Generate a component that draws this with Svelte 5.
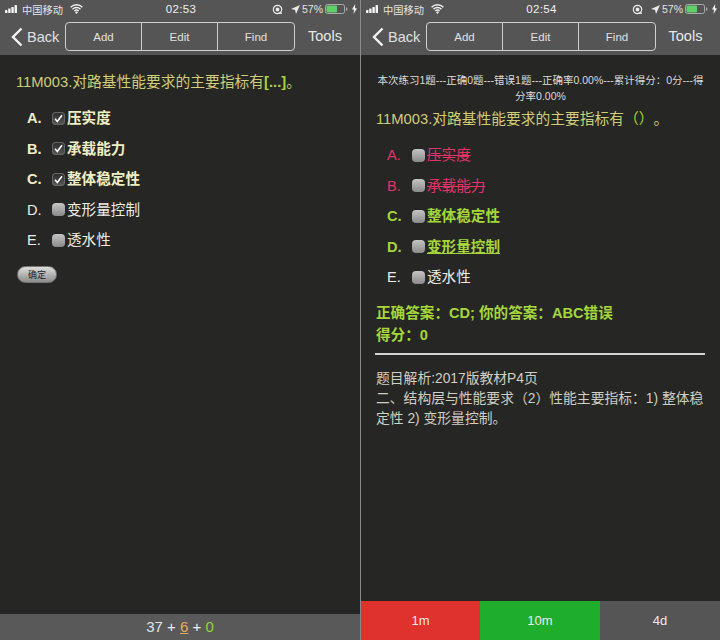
<script>
  const first = [
    { k: 'A.', t: '压实度', on: true, cls: 'chosen' },
    { k: 'B.', t: '承载能力', on: true, cls: 'chosen' },
    { k: 'C.', t: '整体稳定性', on: true, cls: 'chosen' },
    { k: 'D.', t: '变形量控制', on: false, cls: '' },
    { k: 'E.', t: '透水性', on: false, cls: '' }
  ];
  const second = [
    { k: 'A.', t: '压实度', on: false, cls: 'wrong' },
    { k: 'B.', t: '承载能力', on: false, cls: 'wrong' },
    { k: 'C.', t: '整体稳定性', on: false, cls: 'right' },
    { k: 'D.', t: '变形量控制', on: false, cls: 'right under' },
    { k: 'E.', t: '透水性', on: false, cls: '' }
  ];
</script>

{#snippet top(time)}
  <header class="head">
    <div class="status">
      <div class="st-left">
        <svg class="signal" width="15" height="8" viewBox="0 0 15 8"><rect x="0" y="5" width="2.4" height="3" rx=".5"/><rect x="3.2" y="3.6" width="2.4" height="4.4" rx=".5"/><rect x="6.4" y="2" width="2.4" height="6" rx=".5"/><rect x="9.6" y="0" width="2.4" height="8" rx=".5"/></svg>
        <span>中国移动</span>
        <svg class="wifi" width="13" height="10" viewBox="0 0 13 10"><path d="M.6 3.2a8.4 8.4 0 0 1 11.8 0M2.5 5.2a5.7 5.7 0 0 1 8 0M4.4 7.1a3 3 0 0 1 4.2 0" fill="none" stroke="#f2f2f2" stroke-width="1.4"/><path d="M6.5 10 5 8.3a2.1 2.1 0 0 1 3 0z" fill="#f2f2f2"/></svg>
      </div>
      <div class="time">{time}</div>
      <div class="st-right">
        <svg width="11" height="11" viewBox="0 0 11 11"><circle cx="5.5" cy="5.5" r="4.2" fill="none" stroke="#e8e8e8" stroke-width="1.2"/><circle cx="5.5" cy="5.5" r="1.9" fill="#e8e8e8"/><path d="M6 9.2h4" stroke="#e8e8e8" stroke-width="1.3"/></svg>
        <svg class="arrow" width="9" height="9" viewBox="0 0 9 9"><path d="M9 0 0 4l4 1 1 4z" fill="#e8e8e8"/></svg>
        <span class="pct">57%</span>
        <svg class="batt" width="23" height="10" viewBox="0 0 23 10"><rect x=".5" y=".5" width="19" height="9" rx="2" fill="none" stroke="#aaa"/><rect x="1.5" y="1.5" width="10.5" height="7" rx="1" fill="#5fd068"/><path d="M21 3.2c1 0 1.4.7 1.4 1.8S22 6.800 21 6.800z" fill="#aaa"/></svg>
        <svg width="5" height="10" viewBox="0 0 5 10"><path d="M3.200 0 0 5.600h2L1.600 10 5 4.200H3z" fill="#f2f2f2"/></svg>
      </div>
    </div>
    <nav class="nav">
      <div class="back">
        <svg width="12" height="20" viewBox="0 0 12 20"><path d="M10.500 1.500 2 10l8.500 8.500" fill="none" stroke="#f4f4f4" stroke-width="2.400"/></svg>
        <span>Back</span>
      </div>
      <div class="seg">
        <span>Add</span><span>Edit</span><span>Find</span>
      </div>
      <div class="tools">Tools</div>
    </nav>
  </header>
{/snippet}

{#snippet options(list)}
  <ul class="opts">
    {#each list as o}
      <li class={o.cls}>
        <span class="key">{o.k}</span>
        <span class="box" class:on={o.on}>
          {#if o.on}
            <svg width="9" height="9" viewBox="0 0 9 9"><path d="M1 4.800 3.300 7.500 8 1.200" fill="none" stroke="#fff" stroke-width="1.500"/></svg>
          {/if}
        </span>
        <span class="txt">{o.t}</span>
      </li>
    {/each}
  </ul>
{/snippet}

<div class="screen">
  <section class="phone">
    {@render top('02:53')}
    <main class="body left-body">
      <p class="q">11M003.对路基性能要求的主要指标有<b>[...]</b>。</p>
      {@render options(first)}
      <button class="ok">确定</button>
    </main>
    <footer class="count"><span>37</span> + <u>6</u> + <em>0</em></footer>
  </section>

  <section class="phone second">
    {@render top('02:54')}
    <main class="body right-body">
      <p class="stats">本次练习1题---正确0题---错误1题---正确率0.00%---累计得分：0分---得分率0.00%</p>
      <p class="q">11M003.对路基性能要求的主要指标有<i>（）</i>。</p>
      {@render options(second)}
      <p class="ans">正确答案：CD; 你的答案：ABC错误<br />得分：0</p>
      <hr />
      <p class="note">题目解析:2017版教材P4页<br />二、结构层与性能要求（2）性能主要指标：1) 整体稳定性 2) 变形量控制。</p>
    </main>
    <footer class="grade">
      <span class="red">1m</span><span class="green">10m</span><span class="grey">4d</span>
    </footer>
  </section>
</div>

<style>
  :global(body) { margin: 0; background: #262624; }
  .screen {
    display: grid;
    grid-template-columns: 360px 1fr;
    width: 720px;
    height: 640px;
    overflow: hidden;
    font-family: "Liberation Sans", "Noto Sans CJK SC", sans-serif;
    text-spacing-trim: space-all;
  }
  .phone { display: flex; flex-direction: column; height: 640px; min-width: 0; }
  .second { border-left: 1px solid #8a8a8a; }
  .head { height: 55px; background: #555; color: #f0f0f0; flex: none; }
  .status {
    height: 18px;
    display: grid;
    grid-template-columns: 1fr auto 1fr;
    align-items: center;
    padding: 0 3px 0 5px;
    font-size: 10px;
    box-sizing: border-box;
  }
  .st-left { display: flex; align-items: center; color: #e4e4e4; font-size: 10.250px; }
  .signal { fill: #f4f4f4; margin-right: 2px; }
  .wifi { margin-left: 7px; }
  .time { font-size: 11.500px; letter-spacing: .3px; color: #f0f0f0; }
  .st-right { display: flex; align-items: center; justify-content: flex-end; color: #e4e4e4; font-size: 10.500px; }
  .arrow { margin-left: 8px; }
  .pct { margin: 0 2px 0 2px; }
  .batt { margin-right: 4px; }
  .nav { height: 37px; display: flex; align-items: flex-start; padding-top: 4px; box-sizing: border-box; }
  .back {
    width: 65px;
    flex: none;
    display: flex;
    align-items: center;
    gap: 4px;
    height: 30px;
    padding-left: 11px;
    box-sizing: border-box;
    font-size: 14.500px;
    color: #e0e0e0;
  }
  .seg {
    width: 230px;
    height: 29px;
    flex: none;
    box-sizing: border-box;
    border: 1px solid #cfcfcf;
    border-radius: 4px;
    display: grid;
    grid-template-columns: 75px 76px 1fr;
    font-size: 11.500px;
    color: #e0e0e0;
  }
  .seg span { display: flex; align-items: center; justify-content: center; }
  .seg span + span { border-left: 1px solid #cfcfcf; }
  .tools { flex: 1; text-align: center; font-size: 14.600px; line-height: 29px; color: #e8e8e8; padding-right: 5px; }
  .body { flex: 1; background: #262624; min-height: 0; }
  .left-body { padding: 17px 15px 0 16px; }
  .right-body { padding: 16px 15px 0 15px; }
  p { margin: 0; }
  .q { font-size: 14.750px; line-height: 20px; color: #d0cc78; }
  .q b { color: #a5d63a; }
  .q i { color: #a5d63a; font-style: normal; }
  .stats { font-size: 10.500px; line-height: 16px; color: #dcdcdc; text-align: center; padding: 1px 0 5px; }
  .opts { list-style: none; margin: 11px 0 0; padding: 0 0 0 11px; }
  .opts li {
    display: flex;
    align-items: baseline;
    height: 30.500px;
    line-height: 30.500px;
    font-size: 14.600px;
    color: #ecece4;
  }
  .key { width: 25px; flex: none; }
  .box {
    align-self: center;
    width: 13px;
    height: 13px;
    border-radius: 4px;
    background: linear-gradient(#c4c4c4, #8a8a8a);
    margin-right: 2px;
    flex: none;
    display: flex;
    align-items: center;
    justify-content: center;
  }
  .box.on { background: linear-gradient(#2a2a2a, #5a5a5a); box-shadow: inset 0 0 0 1px #666; }
  .chosen { font-weight: bold; color: #f0efc4 !important; }
  .wrong { color: #e03468 !important; }
  .wrong .txt { text-decoration: line-through; }
  .right { color: #a5d63a !important; font-weight: bold; }
  .under .txt { text-decoration: underline; }
  .ok {
    display: block;
    margin: 10px 0 0 1px;
    width: 40px;
    height: 17px;
    padding: 0;
    border: 1px solid #777;
    border-radius: 9px;
    background: linear-gradient(#ddd, #8c8c8c);
    color: #222;
    font: 9px "Liberation Sans", "Noto Sans CJK SC", sans-serif;
  }
  .count {
    height: 26px;
    flex: none;
    background: #595959;
    color: #eee;
    text-align: center;
    font-size: 15px;
    line-height: 26px;
  }
  .count span { color: #dfe6ea; }
  .count u { color: #e9a860; }
  .count em { color: #8fd63c; font-style: normal; }
  .ans { margin-top: 9px; font-size: 14.600px; line-height: 22px; font-weight: bold; color: #a5d63a; }
  hr { border: 0; height: 2px; background: #d4d4d4; margin: 7px 0 0 -1px; }
  .note { margin-top: 14px; font-size: 13.800px; line-height: 20px; color: #cfcfc4; }
  .grade { height: 39px; flex: none; display: grid; grid-template-columns: 119px 120px 1fr; font-size: 13px; color: #f0e8e8; }
  .grade span { display: flex; align-items: center; justify-content: center; }
  .red { background: #e0322c; }
  .green { background: #1fae2b; }
  .grey { background: #555; }
</style>
